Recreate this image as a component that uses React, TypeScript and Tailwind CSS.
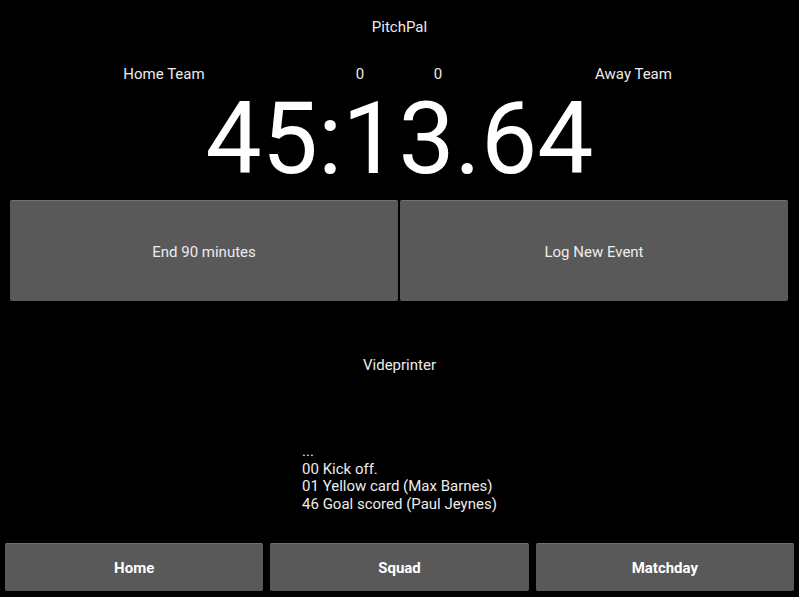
import React from "react";

export default function App() {
  const events = ["...", "00 Kick off.", "01 Yellow card (Max Barnes)", "46 Goal scored (Paul Jeynes)"];
  return (
    <div className="w-[799px] h-[597px] bg-black text-[#ececec] font-['Roboto',sans-serif] text-[15px] flex flex-col overflow-hidden">
      <div className="h-[54px] flex items-center justify-center">PitchPal</div>
      <div className="h-[38px] pt-[2px] grid grid-cols-[328px_64px_16px_60px_1fr] items-center text-center">
        <div>Home Team</div>
        <div>0</div>
        <div></div>
        <div>0</div>
        <div>Away Team</div>
      </div>
      <div className="h-[108px] text-center text-white text-[100px] leading-[94px]">45:13.64</div>
      <div className="h-[101px] grid grid-cols-[388px_388px] gap-[2px] px-[10px]">
        <button className="bg-[#595959] border-t border-[#727272] rounded-[2px] pt-[2px] text-[#ececec] text-[15px]">End 90 minutes</button>
        <button className="bg-[#595959] border-t border-[#727272] rounded-[2px] pt-[2px] text-[#ececec] text-[15px]">Log New Event</button>
      </div>
      <div className="h-[126px] pt-[2px] flex items-center justify-center">Videprinter</div>
      <div className="pt-[16px] flex justify-center">
        <div className="text-left leading-[17.7px]">
          {events.map((e) => (
            <div key={e}>{e}</div>
          ))}
        </div>
      </div>
      <div className="flex-1"></div>
      <div className="h-[48px] mb-[6px] grid grid-cols-3 gap-[7px] px-[5px]">
        <button className="bg-[#595959] border-t border-[#727272] rounded-[2px] pt-[2px] text-white font-bold text-[15px]">Home</button>
        <button className="bg-[#595959] border-t border-[#727272] rounded-[2px] pt-[2px] text-white font-bold text-[15px]">Squad</button>
        <button className="bg-[#595959] border-t border-[#727272] rounded-[2px] pt-[2px] text-white font-bold text-[15px]">Matchday</button>
      </div>
    </div>
  );
}
